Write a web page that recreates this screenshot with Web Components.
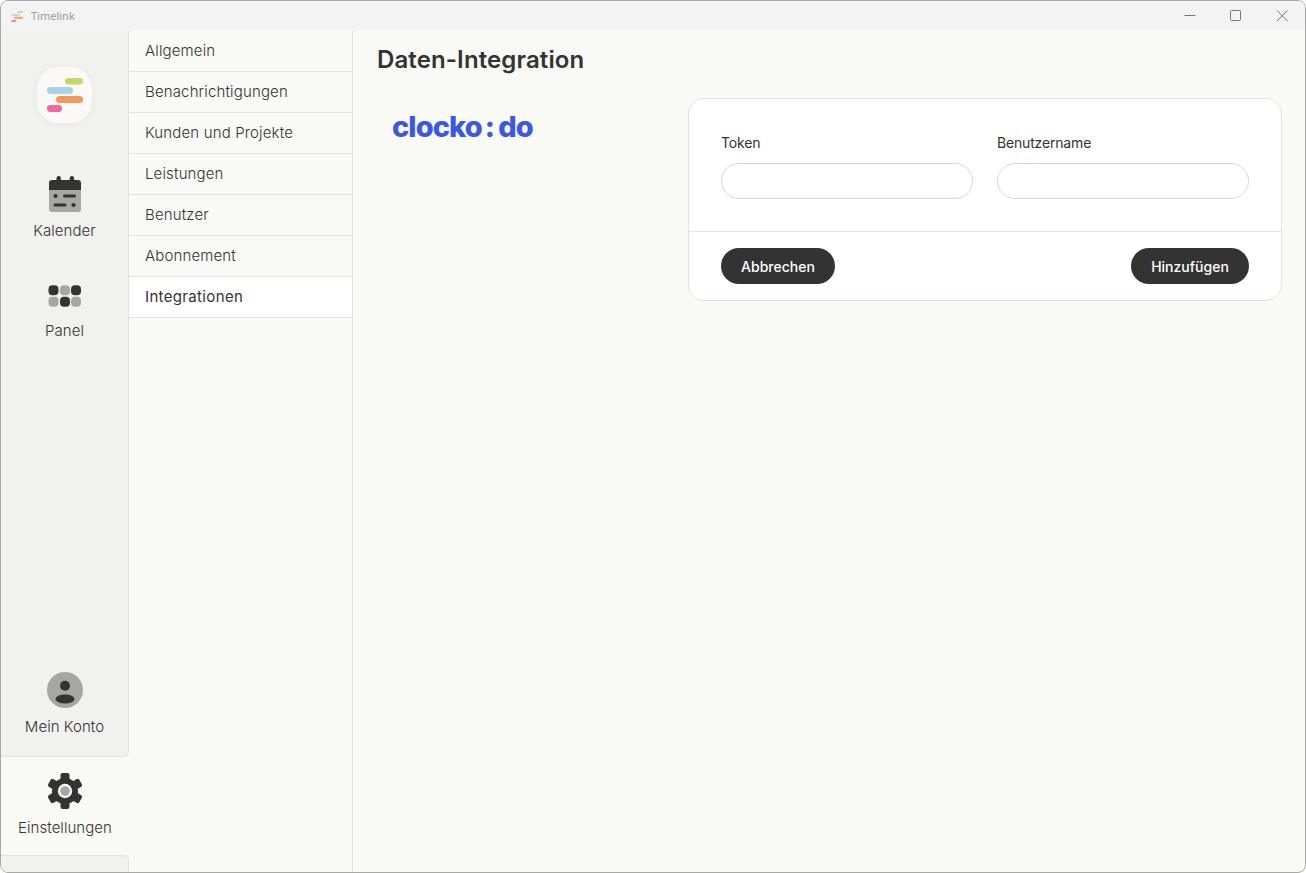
<!DOCTYPE html>
<html lang="de">
<head>
<meta charset="utf-8">
<title>Timelink</title>
<style>
  html, body { margin: 0; height: 100%; background: #fff; }
  body { font-family: Inter, "Liberation Sans", sans-serif; color: #333; }
</style>
</head>
<body>
<app-window>
  <title-bar slot="top">Timelink</title-bar>
  <side-rail slot="rail">
    <rail-item slot="main" label="Kalender" icon="calendar"></rail-item>
    <rail-item slot="main" label="Panel" icon="panel"></rail-item>
    <rail-item slot="account" label="Mein Konto" icon="avatar"></rail-item>
    <rail-item slot="active" label="Einstellungen" icon="gear"></rail-item>
  </side-rail>
  <sub-menu slot="menu">
    <menu-item>Allgemein</menu-item>
    <menu-item>Benachrichtigungen</menu-item>
    <menu-item>Kunden und Projekte</menu-item>
    <menu-item>Leistungen</menu-item>
    <menu-item>Benutzer</menu-item>
    <menu-item>Abonnement</menu-item>
    <menu-item active>Integrationen</menu-item>
  </sub-menu>
  <integration-page slot="main" heading="Daten-Integration">
    <brand-logo slot="logo"></brand-logo>
    <text-field slot="fields" label="Token"></text-field>
    <text-field slot="fields" label="Benutzername"></text-field>
    <pill-button slot="cancel" style="--pill-w:114px">Abbrechen</pill-button>
    <pill-button slot="submit" style="--pill-w:118px">Hinzufügen</pill-button>
  </integration-page>
</app-window>

<script>
const bars = `
  <rect x="27" y="11" width="18" height="6.5" rx="3.2" fill="#c9d56f"/>
  <rect x="9" y="20" width="26" height="7" rx="3.5" fill="#a9d4e8"/>
  <rect x="18" y="29" width="27" height="7" rx="3.5" fill="#f4975a"/>
  <rect x="9" y="38" width="15" height="7" rx="3.5" fill="#ea6ba5"/>`;

const icons = {
  calendar: `
    <rect x="9.5" y="0" width="4.4" height="8" rx="2.2" fill="#333"/>
    <rect x="22.7" y="0" width="4.4" height="8" rx="2.2" fill="#333"/>
    <path d="M5 4h26a3 3 0 0 1 3 3v8H2V7a3 3 0 0 1 3-3z" fill="#333"/>
    <path d="M2 14h32v19a3 3 0 0 1-3 3H5a3 3 0 0 1-3-3z" fill="#a6a6a3"/>
    <circle cx="8.5" cy="20" r="2.1" fill="#333"/>
    <rect x="16" y="18.5" width="13" height="3" rx="1.5" fill="#333"/>
    <rect x="6.5" y="27.5" width="13" height="3" rx="1.5" fill="#333"/>
    <circle cx="26.5" cy="29" r="2.1" fill="#333"/>`,
  panel: `
    <rect x="1.5" y="9.3" width="10" height="10" rx="4" fill="#333"/>
    <rect x="13" y="9.3" width="10" height="10" rx="4" fill="#a6a6a3"/>
    <rect x="24" y="9.3" width="10" height="10" rx="4" fill="#333"/>
    <rect x="1.5" y="20.7" width="10" height="10" rx="4" fill="#a6a6a3"/>
    <rect x="13" y="20.7" width="10" height="10" rx="4" fill="#333"/>
    <rect x="24" y="20.7" width="10" height="10" rx="4" fill="#a6a6a3"/>`,
  avatar: `
    <circle cx="18" cy="18" r="18" fill="#a6a6a3"/>
    <circle cx="18" cy="13.7" r="5" fill="#333"/>
    <ellipse cx="18" cy="27" rx="9.5" ry="4.6" fill="#333"/>`,
  gear: `
    <g fill="#333">
      <circle cx="18" cy="18" r="13"/>
      ${[0, 60, 120, 180, 240, 300].map(a => `<rect x="13.5" y="0" width="9" height="9" rx="2.2" transform="rotate(${a} 18 18)"/>`).join('')}
    </g>
    <circle cx="18" cy="18" r="7.2" fill="#f9f9f5"/>
    <circle cx="18" cy="18" r="4.8" fill="#a6a6a3"/>`
};

class AppWindow extends HTMLElement {
  constructor() {
    super();
    this.attachShadow({ mode: 'open' }).innerHTML = `
      <style>
        :host { display: flex; flex-direction: column; box-sizing: border-box; height: 873px; width: 1306px;
                border: 1px solid #a8a8a8; border-radius: 8px; overflow: hidden; background: #f9f9f5; }
        .body { flex: 1; display: flex; min-height: 0; }
      </style>
      <slot name="top"></slot>
      <div class="body">
        <slot name="rail"></slot>
        <slot name="menu"></slot>
        <slot name="main"></slot>
      </div>`;
  }
}

class TitleBar extends HTMLElement {
  constructor() {
    super();
    this.attachShadow({ mode: 'open' }).innerHTML = `
      <style>
        :host { display: flex; align-items: center; height: 30px; flex: none; background: #f3f3f3;
                font: 11px "Noto Sans", sans-serif; color: #999; padding-left: 10px; }
        .name { padding-bottom: 1px; }
        .app { width: 13px; height: 13px; margin-right: 7px; opacity: .8; }
        .ctl { margin-left: auto; display: flex; }
        .ctl svg { width: 46px; height: 30px; display: block; }
      </style>
      <svg class="app" viewBox="8 8 40 40">${bars}</svg>
      <span class="name"><slot></slot></span>
      <div class="ctl">
        <svg viewBox="0 0 46 30"><path d="M17.5 14.5h11" stroke="#777" fill="none"/></svg>
        <svg viewBox="0 0 46 30"><rect x="17.5" y="9.5" width="10" height="10" rx="1" stroke="#777" fill="none"/></svg>
        <svg viewBox="0 0 46 30"><path d="M18 9.5l10.5 10.5M28.5 9.5L18 20" stroke="#777" fill="none"/></svg>
      </div>`;
  }
}

class SideRail extends HTMLElement {
  constructor() {
    super();
    this.attachShadow({ mode: 'open' }).innerHTML = `
      <style>
        :host { display: flex; flex-direction: column; width: 128px; flex: none; }
        .upper { flex: 1; display: flex; flex-direction: column; background: #f1f1ed;
                 border-right: 1px solid #e2e2de; border-bottom: 1px solid #e2e2de; border-bottom-right-radius: 5px; }
        .logo { height: 129px; padding-top: 36px; box-sizing: border-box; display: flex; justify-content: center; }
        .logo div { width: 55px; height: 56px; border-radius: 21px; background: #faf9f5;
                    box-shadow: 0 0 6px rgba(0,0,0,.05); }
        .logo svg { display: block; width: 55px; height: 56px; }
        .spacer { flex: 1; }
        .tail { height: 16px; flex: none; background: #f1f1ed; border-right: 1px solid #e2e2de;
                border-top: 1px solid #e2e2de; border-top-right-radius: 5px; }
      </style>
      <div class="upper">
        <div class="logo"><div><svg viewBox="-1 0 55 56">${bars}</svg></div></div>
        <slot name="main"></slot>
        <div class="spacer"></div>
        <slot name="account"></slot>
      </div>
      <slot name="active"></slot>
      <div class="tail"></div>`;
  }
}

class RailItem extends HTMLElement {
  constructor() {
    super();
    this.attachShadow({ mode: 'open' }).innerHTML = `
      <style>
        :host { display: flex; flex-direction: column; align-items: center; height: 100px; flex: none;
                padding-top: 16px; box-sizing: border-box; font-size: 15px; font-weight: 300;
                letter-spacing: .05px; color: #333; }
        :host([slot="active"]) { height: 98px; }
        svg { width: 36px; height: 36px; display: block; }
        span { margin-top: 9px; line-height: 20px; }
      </style>
      <svg viewBox="0 0 36 36">${icons[this.getAttribute('icon')] || ''}</svg>
      <span>${this.getAttribute('label') || ''}</span>`;
  }
}

class SubMenu extends HTMLElement {
  constructor() {
    super();
    this.attachShadow({ mode: 'open' }).innerHTML = `
      <style>
        :host { display: block; width: 224px; flex: none; box-sizing: border-box; border-right: 1px solid #e2e2de; }
      </style>
      <slot></slot>`;
  }
}

class MenuItem extends HTMLElement {
  constructor() {
    super();
    this.attachShadow({ mode: 'open' }).innerHTML = `
      <style>
        :host { display: flex; align-items: center; height: 41px; box-sizing: border-box; padding: 0 0 2px 16px;
                border-bottom: 1px solid #e2e2de; font-size: 15px; font-weight: 300; letter-spacing: .15px; color: #333; }
        :host([active]) { background: #fff; font-weight: 400; letter-spacing: .35px; box-shadow: 0 -1px 0 #e2e2de; }
      </style>
      <slot></slot>`;
  }
}

class BrandLogo extends HTMLElement {
  constructor() {
    super();
    this.attachShadow({ mode: 'open' }).innerHTML = `
      <style>
        :host { display: block; font: 800 29px/32px Inter, sans-serif; color: #3a57e8; letter-spacing: -.9px; white-space: nowrap; }
        b { font-weight: 800; margin: 0 4px 0 3px; }
      </style>
      clocko<b>:</b>do`;
  }
}

class IntegrationPage extends HTMLElement {
  constructor() {
    super();
    this.attachShadow({ mode: 'open' }).innerHTML = `
      <style>
        :host { display: block; flex: 1; min-width: 0; padding: 0 23px 0 24px; }
        h1 { margin: 0; padding-top: 1px; height: 55px; line-height: 55px; font-size: 24px; font-weight: 600;
             letter-spacing: .12px; color: #333; }
        .row { display: flex; margin-top: 11px; }
        .brand { width: 311px; flex: none; padding: 13px 0 0 15px; box-sizing: border-box; }
        .card { flex: 1; background: #fff; border: 1px solid #e2e2de; border-radius: 16px; height: 203px; box-sizing: border-box; }
        .fields { display: grid; grid-template-columns: 1fr 1fr; gap: 24px; padding: 32px; height: 133px; box-sizing: border-box; border-bottom: 1px solid #e8e8e5; }
        .actions { display: flex; justify-content: space-between; padding: 16px 32px; }
      </style>
      <h1>${this.getAttribute('heading') || ''}</h1>
      <div class="row">
        <div class="brand"><slot name="logo"></slot></div>
        <section class="card">
          <div class="fields"><slot name="fields"></slot></div>
          <div class="actions"><slot name="cancel"></slot><slot name="submit"></slot></div>
        </section>
      </div>`;
  }
}

class TextField extends HTMLElement {
  constructor() {
    super();
    this.attachShadow({ mode: 'open' }).innerHTML = `
      <style>
        :host { display: block; }
        label { display: block; font-size: 14px; letter-spacing: -.17px; line-height: 24px; color: #333; margin-bottom: 8px; }
        input { display: block; box-sizing: border-box; width: 100%; height: 36px; border: 1px solid #d6d6d3;
                border-radius: 18px; background: #fff; outline: none; padding: 0 16px; }
      </style>
      <label>${this.getAttribute('label') || ''}</label>
      <input type="text">`;
  }
}

class PillButton extends HTMLElement {
  constructor() {
    super();
    this.attachShadow({ mode: 'open' }).innerHTML = `
      <style>
        :host { display: inline-flex; align-items: center; justify-content: center; height: 36px;
                width: var(--pill-w, auto); border-radius: 18px; background: #333; color: #fff;
                font-size: 14px; font-weight: 500; }
      </style>
      <slot></slot>`;
  }
}

customElements.define('app-window', AppWindow);
customElements.define('title-bar', TitleBar);
customElements.define('side-rail', SideRail);
customElements.define('rail-item', RailItem);
customElements.define('sub-menu', SubMenu);
customElements.define('menu-item', MenuItem);
customElements.define('brand-logo', BrandLogo);
customElements.define('integration-page', IntegrationPage);
customElements.define('text-field', TextField);
customElements.define('pill-button', PillButton);
</script>
</body>
</html>
